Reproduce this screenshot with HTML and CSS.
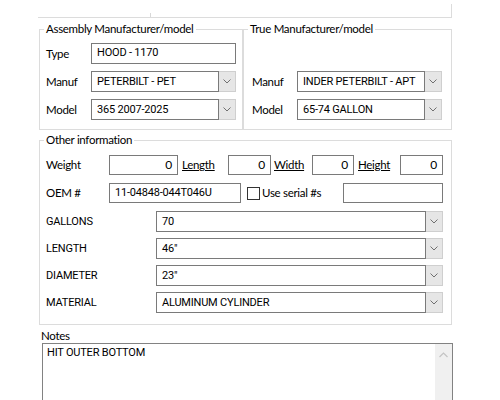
FILE: index.html
```html
<!DOCTYPE html>
<html>
<head>
<meta charset="utf-8">
<link rel="stylesheet" href="styles.css">
</head>
<body>
<div class="wrap">
  <div class="topline"></div>
  <div class="groups">
    <fieldset class="grp grp-asm">
      <legend>Assembly Manufacturer/model</legend>
      <div class="rows rows-asm">
        <div class="frow"><span class="lbl lbl-a">Type</span><div class="tbox w145">HOOD - 1170</div></div>
        <div class="frow"><span class="lbl lbl-a">Manuf</span><div class="combo w145"><div class="ctext">PETERBILT - PET</div><div class="cbtn"><svg width="8" height="5" viewBox="0 0 8 5"><polyline points="0.5,0.5 4,4 7.5,0.5" fill="none" stroke="#707070" stroke-width="1"/></svg></div></div></div>
        <div class="frow"><span class="lbl lbl-a">Model</span><div class="combo w145"><div class="ctext">365 2007-2025</div><div class="cbtn"><svg width="8" height="5" viewBox="0 0 8 5"><polyline points="0.5,0.5 4,4 7.5,0.5" fill="none" stroke="#707070" stroke-width="1"/></svg></div></div></div>
      </div>
    </fieldset>
    <fieldset class="grp grp-true">
      <legend>True Manufacturer/model</legend>
      <div class="rows rows-true">
        <div class="frow"><span class="lbl lbl-a">Manuf</span><div class="combo w145"><div class="ctext">INDER PETERBILT - APT</div><div class="cbtn"><svg width="8" height="5" viewBox="0 0 8 5"><polyline points="0.5,0.5 4,4 7.5,0.5" fill="none" stroke="#707070" stroke-width="1"/></svg></div></div></div>
        <div class="frow"><span class="lbl lbl-a">Model</span><div class="combo w145"><div class="ctext">65-74 GALLON</div><div class="cbtn"><svg width="8" height="5" viewBox="0 0 8 5"><polyline points="0.5,0.5 4,4 7.5,0.5" fill="none" stroke="#707070" stroke-width="1"/></svg></div></div></div>
      </div>
    </fieldset>
  </div>

  <fieldset class="grp grp-other">
    <legend>Other information</legend>
    <div class="rows rows-other">
      <div class="frow h20">
        <span class="lbl lbl-w">Weight</span>
        <div class="tbox num w-weight">0</div>
        <span class="ulbl ul-len">Length</span>
        <div class="tbox num w-len">0</div>
        <span class="ulbl ul-wid">Width</span>
        <div class="tbox num w-wid">0</div>
        <span class="ulbl ul-hgt">Height</span>
        <div class="tbox num w-hgt">0</div>
      </div>
      <div class="frow h20">
        <span class="lbl lbl-w">OEM #</span>
        <div class="tbox w-oem">11-04848-044T046U</div>
        <span class="chk"></span>
        <span class="chk-lbl">Use serial #s</span>
        <div class="tbox w-serial"></div>
      </div>
      <div class="selrows">
        <div class="frow"><span class="lbl lbl-caps">GALLONS</span><div class="combo w-sel"><div class="ctext">70</div><div class="cbtn"><svg width="8" height="5" viewBox="0 0 8 5"><polyline points="0.5,0.5 4,4 7.5,0.5" fill="none" stroke="#707070" stroke-width="1"/></svg></div></div></div>
        <div class="frow"><span class="lbl lbl-caps">LENGTH</span><div class="combo w-sel"><div class="ctext">46"</div><div class="cbtn"><svg width="8" height="5" viewBox="0 0 8 5"><polyline points="0.5,0.5 4,4 7.5,0.5" fill="none" stroke="#707070" stroke-width="1"/></svg></div></div></div>
        <div class="frow"><span class="lbl lbl-caps">DIAMETER</span><div class="combo w-sel"><div class="ctext">23"</div><div class="cbtn"><svg width="8" height="5" viewBox="0 0 8 5"><polyline points="0.5,0.5 4,4 7.5,0.5" fill="none" stroke="#707070" stroke-width="1"/></svg></div></div></div>
        <div class="frow"><span class="lbl lbl-caps">MATERIAL</span><div class="combo w-sel"><div class="ctext">ALUMINUM CYLINDER</div><div class="cbtn"><svg width="8" height="5" viewBox="0 0 8 5"><polyline points="0.5,0.5 4,4 7.5,0.5" fill="none" stroke="#707070" stroke-width="1"/></svg></div></div></div>
      </div>
    </div>
  </fieldset>

  <div class="notes-lbl">Notes</div>
  <div class="notes">
    <div class="notes-text">HIT OUTER BOTTOM</div>
    <div class="vscroll"><svg width="9" height="6" viewBox="0 0 9 6"><polyline points="0.5,5 4.5,1 8.5,5" fill="none" stroke="#c4c4c4" stroke-width="1.2"/></svg></div>
  </div>
</div>
</body>
</html>
```

FILE: styles.css
```css
html, body {
  margin: 0;
  padding: 0;
  background: #ffffff;
}

body {
  font-family: Lato, "Noto Sans", sans-serif;
  font-size: 11.5px;
  letter-spacing: -0.3px;
  color: #000;
}

.wrap {
  margin-left: 39px;
  width: 413px;
}

.topline {
  position: relative;
  height: 13px;
  margin-top: 4px;
  border-bottom: 1px solid #dcdcdc;
  border-right: 1px solid #dcdcdc;
  margin-left: -1px;
  width: 413px;
}

.topline::after {
  content: "";
  position: absolute;
  left: 112px;
  bottom: 0;
  width: 1px;
  height: 4px;
  background: #d8d8d8;
}

.groups {
  display: flex;
  margin-top: 4px;
}

fieldset.grp {
  margin: 0;
  padding: 0;
  min-width: 0;
  border: 1px solid #dcdcdc;
}

fieldset.grp legend {
  margin-left: 4px;
  padding: 0 2px;
  line-height: 14px;
}

.grp-asm {
  width: 204px;
  box-sizing: border-box;
}

.grp-true {
  width: 209px;
  box-sizing: border-box;
}

.grp-other {
  width: 413px;
  box-sizing: border-box;
  margin-top: 3px !important;
}

.rows {
  display: flex;
  flex-direction: column;
}

.rows-asm {
  padding: 7px 6px 9px 6px;
  gap: 7px;
}

.rows-true {
  padding: 35px 8px 9px 8px;
  gap: 7px;
}

.rows-other {
  padding: 8px 8px 11px 6px;
  gap: 8px;
}

.selrows {
  display: flex;
  flex-direction: column;
  gap: 6px;
}

.frow {
  display: flex;
  align-items: center;
  height: 21px;
}

.frow.h20 {
  height: 20px;
}

.lbl {
  flex: none;
  line-height: 14px;
}

.lbl-a {
  width: 45px;
}

.lbl-w {
  width: 63px;
}

.lbl-caps {
  width: 110px;
  font-family: Roboto, "Liberation Sans", sans-serif;
  font-size: 11px;
  letter-spacing: -0.2px;
}

.tbox {
  box-sizing: border-box;
  height: 100%;
  border: 1px solid #7a7a7a;
  background: #fff;
  font-family: Roboto, "Liberation Sans", sans-serif;
  font-size: 11px;
  letter-spacing: -0.2px;
  line-height: 18px;
  padding: 0 5px;
  white-space: nowrap;
  overflow: hidden;
  flex: none;
}

.tbox.num {
  text-align: right;
  font-family: Lato, sans-serif;
  font-size: 12px;
  padding-right: 5px;
}

.w145 {
  width: 145px;
}

.w-weight { width: 69px; }
.w-len { width: 43px; }
.w-wid { width: 42px; }
.w-hgt { width: 43px; }
.w-oem { width: 132px; }
.w-serial { width: 100px; margin-left: auto; margin-right: 0; }
.w-sel { width: 287px; }

.ulbl {
  flex: none;
  text-decoration: underline;
  padding-left: 4px;
  box-sizing: border-box;
  line-height: 14px;
}

.ul-len { width: 50px; }
.ul-wid { width: 41px; padding-left: 3px; }
.ul-hgt { width: 46px; }

.chk {
  flex: none;
  box-sizing: border-box;
  width: 13px;
  height: 13px;
  border: 1px solid #333;
  background: #fff;
  margin-left: 6px;
}

.chk-lbl {
  flex: none;
  margin-left: 2px;
  line-height: 14px;
}

.combo {
  display: flex;
  height: 100%;
  flex: none;
  box-sizing: border-box;
}

.ctext {
  flex: 1;
  box-sizing: border-box;
  border: 1px solid #7a7a7a;
  font-family: Roboto, "Liberation Sans", sans-serif;
  font-size: 11px;
  letter-spacing: -0.2px;
  line-height: 19px;
  padding: 0 5px;
  white-space: nowrap;
  overflow: hidden;
}

.cbtn {
  flex: none;
  width: 17px;
  box-sizing: border-box;
  background: #e6e6e6;
  border: 1px solid #cfcfcf;
  border-left: none;
  display: flex;
  align-items: center;
  justify-content: center;
}

.notes-lbl {
  margin-top: 4px;
  padding-left: 2px;
  line-height: 14px;
}

.notes {
  display: flex;
  margin-left: 3px;
  width: 411px;
  height: 70px;
  box-sizing: border-box;
  border: 1px solid #828282;
}

.notes-text {
  flex: 1;
  padding: 2px 4px;
  font-family: Roboto, "Liberation Sans", sans-serif;
  font-size: 11px;
  letter-spacing: -0.2px;
  line-height: 14px;
}

.vscroll {
  flex: none;
  width: 17px;
  background: #f0f0f0;
  display: flex;
  justify-content: center;
  align-items: flex-start;
  padding-top: 8px;
  box-sizing: border-box;
}
```
